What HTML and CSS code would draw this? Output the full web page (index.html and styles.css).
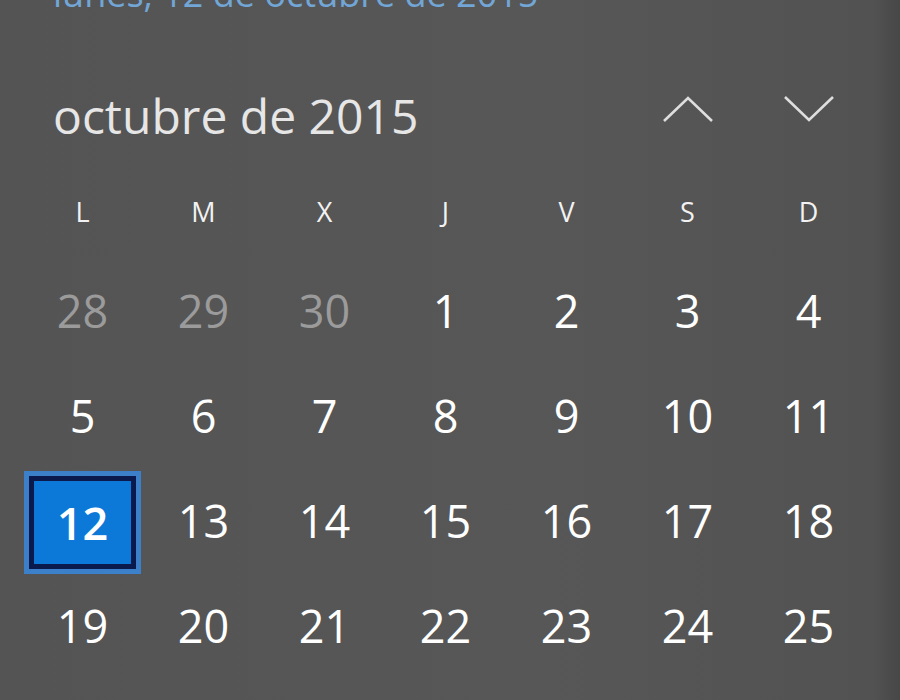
FILE: index.html
```html
<!DOCTYPE html>
<html lang="es">
<head>
  <meta charset="UTF-8" />
  <title>Calendario</title>
  <link rel="stylesheet" href="styles.css">
</head>
<body>

<div class="calendar">
  <div class="today-link">lunes, 12 de octubre de 2015</div>

  <div class="month-row">
    <div class="month-title">octubre de 2015</div>
    <button class="nav-btn" aria-label="Mes anterior">
      <svg width="54" height="30" viewBox="0 0 54 30" fill="none">
        <path d="M3 27L27 4L51 27" stroke="currentColor" stroke-width="2.6"/>
      </svg>
    </button>
    <button class="nav-btn" aria-label="Mes siguiente">
      <svg width="54" height="30" viewBox="0 0 54 30" fill="none">
        <path d="M3 3L27 26L51 3" stroke="currentColor" stroke-width="2.6"/>
      </svg>
    </button>
  </div>

  <div class="week-names">
    <span>L</span><span>M</span><span>X</span><span>J</span><span>V</span><span>S</span><span>D</span>
  </div>

  <div class="days">
    <div class="day other">28</div>
    <div class="day other">29</div>
    <div class="day other">30</div>
    <div class="day">1</div>
    <div class="day">2</div>
    <div class="day">3</div>
    <div class="day">4</div>

    <div class="day">5</div>
    <div class="day">6</div>
    <div class="day">7</div>
    <div class="day">8</div>
    <div class="day">9</div>
    <div class="day">10</div>
    <div class="day">11</div>

    <div class="day"><span class="selected">12</span></div>
    <div class="day">13</div>
    <div class="day">14</div>
    <div class="day">15</div>
    <div class="day">16</div>
    <div class="day">17</div>
    <div class="day">18</div>

    <div class="day">19</div>
    <div class="day">20</div>
    <div class="day">21</div>
    <div class="day">22</div>
    <div class="day">23</div>
    <div class="day">24</div>
    <div class="day">25</div>
  </div>
</div>

</body>
</html>
```

FILE: styles.css
```css
body {
  margin: 0;
  height: 700px;
  overflow: hidden;
  font-family: 'Open Sans', 'Noto Sans', sans-serif;
  background: linear-gradient(to right, #545454 0%, #575757 60%, #525252 97%, #474747 100%);
  color: #fff;
}

.calendar {
  padding-left: 22px;
  width: 847px;
}

.today-link {
  margin-top: -25px;
  padding-left: 31px;
  font-size: 36px;
  line-height: 38px;
  color: #72a6d6;
}

.month-row {
  display: flex;
  align-items: center;
  height: 80px;
  margin-top: 62px;
}

.month-title {
  flex: 1;
  padding-left: 31px;
  font-size: 48px;
  color: #e6e6e6;
}

.nav-btn {
  width: 121px;
  height: 60px;
  margin-top: -12px;
  display: flex;
  align-items: center;
  justify-content: center;
  background: none;
  border: none;
  padding: 0;
  color: #dedede;
}

.week-names {
  display: grid;
  grid-template-columns: repeat(7, 121px);
  height: 50px;
  margin-top: 31px;
  align-items: center;
  justify-items: center;
  font-size: 27px;
  color: #f2f2f2;
}

.days {
  display: grid;
  grid-template-columns: repeat(7, 121px);
  grid-auto-rows: 105px;
  margin-top: 22px;
}

.day {
  display: flex;
  align-items: center;
  justify-content: center;
  font-size: 45px;
  color: #fff;
}

.day.other {
  color: #9b9b9b;
}

.selected {
  width: 97px;
  height: 83px;
  margin-top: 4px;
  display: flex;
  align-items: center;
  justify-content: center;
  font-weight: 600;
  background: #0c78d8;
  border: 5px solid #0b1a4c;
  outline: 5px solid #3b80c8;
}
```
